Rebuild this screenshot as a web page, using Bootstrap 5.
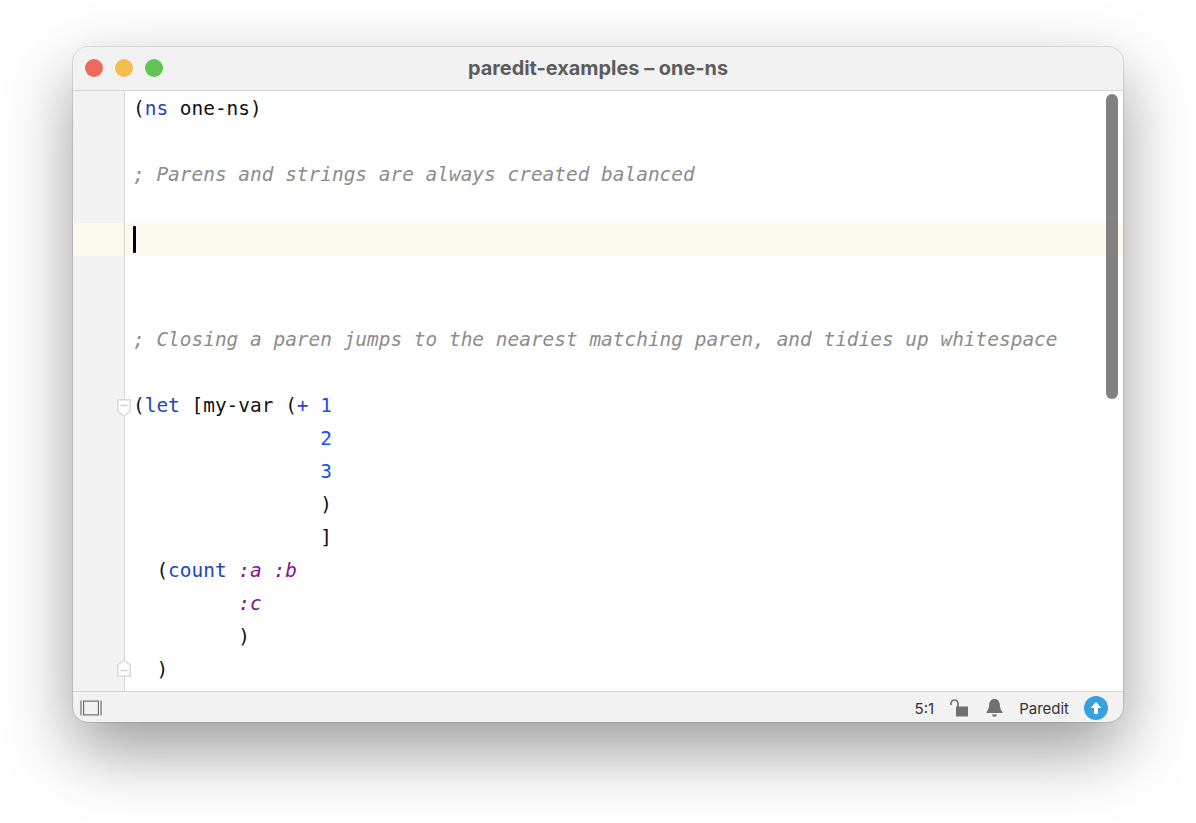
<!DOCTYPE html>
<html lang="en">
<head>
<meta charset="utf-8">
<title>paredit-examples – one-ns</title>
<link href="https://cdn.jsdelivr.net/npm/bootstrap@5.3.0/dist/css/bootstrap.min.css" rel="stylesheet">
<style>
html,body{height:100%;background:#fff;overflow:hidden}
.stage{padding:47px 73px 0}
.win{width:1050px;height:675px;border-radius:15px;background:#f2f2f2;box-shadow:0 0 0 1px rgba(0,0,0,.1),0 28px 68px rgba(0,0,0,.4);overflow:hidden}
.titlebar{height:44px;border-bottom:1px solid #d6d6d6;padding-left:12px}
.dots{gap:12px;margin-top:-1px}
.dot{width:18px;height:18px;border-radius:50%}
.dot-r{background:#ee6a5f}.dot-y{background:#f5bd4f}.dot-g{background:#61c454}
.wintitle{left:0;right:0;text-align:center;font:700 19.9px/41px Inter,"Liberation Sans",sans-serif;color:#5c5c5c}
.editor{height:600px;background:#fff;overflow:hidden}
.ln{height:33px;font:19.44px/33px "DejaVu Sans Mono","Liberation Mono",monospace;color:#111;white-space:pre}
.gut{flex:0 0 52px;background:#f2f2f2;border-right:1px solid #d6d6d6}
.code{padding:1px 0 0 8px}
.ln-cur,.ln-cur .gut{background:#fcfaee}
.ln-last{height:39px}
.kw{color:#1f45bd}.num{color:#1750eb}.key{color:#871094;font-style:italic}
.cmt{color:#8c8c8c;font-style:italic}
.caret{display:inline-block;width:3px;height:27px;background:#000;vertical-align:top;margin:2px 0 0 0;border-radius:1px}
.fold{position:absolute;right:-7px;top:11px;width:14px;height:18px}
.fold-end{top:7px}
.sbar{position:absolute;left:1033px;top:3px;width:12px;height:305px;border-radius:6px;background:rgba(90,90,90,.76)}
.status{height:31px;border-top:1px solid #d6d6d6;padding:1px 15px 0 7px;font:15px/1 Inter,"Liberation Sans",sans-serif;color:#333}
.status span{padding-top:1px}
.ic{display:block}
</style>
</head>
<body>
<div class="stage">
<div class="win d-flex flex-column position-relative">
  <div class="titlebar d-flex align-items-center position-relative">
    <div class="wintitle position-absolute">paredit-examples – one-ns</div>
    <div class="dots d-flex position-relative"><span class="dot dot-r"></span><span class="dot dot-y"></span><span class="dot dot-g"></span></div>
  </div>
  <div class="editor position-relative">
    <div class="ln d-flex"><div class="gut"></div><div class="code">(<span class="kw">ns</span> one-ns)</div></div>
    <div class="ln d-flex"><div class="gut"></div><div class="code"></div></div>
    <div class="ln d-flex"><div class="gut"></div><div class="code cmt">; Parens and strings are always created balanced</div></div>
    <div class="ln d-flex"><div class="gut"></div><div class="code"></div></div>
    <div class="ln ln-cur d-flex"><div class="gut"></div><div class="code"><span class="caret"></span></div></div>
    <div class="ln d-flex"><div class="gut"></div><div class="code"></div></div>
    <div class="ln d-flex"><div class="gut"></div><div class="code"></div></div>
    <div class="ln d-flex"><div class="gut"></div><div class="code cmt">; Closing a paren jumps to the nearest matching paren, and tidies up whitespace</div></div>
    <div class="ln d-flex"><div class="gut"></div><div class="code"></div></div>
    <div class="ln d-flex"><div class="gut position-relative"><svg class="fold" viewBox="0 0 14 18"><path d="M.8.8H13.200V12L7 17 .8 12Z" fill="#fff" stroke="#dadada" stroke-width="1.600"/><path d="M3.500 6.500h7" stroke="#cfcfcf" stroke-width="1.500"/></svg></div><div class="code">(<span class="kw">let</span> [my-var (<span class="kw">+</span> <span class="num">1</span></div></div>
    <div class="ln d-flex"><div class="gut"></div><div class="code">                <span class="num">2</span></div></div>
    <div class="ln d-flex"><div class="gut"></div><div class="code">                <span class="num">3</span></div></div>
    <div class="ln d-flex"><div class="gut"></div><div class="code">                )</div></div>
    <div class="ln d-flex"><div class="gut"></div><div class="code">                ]</div></div>
    <div class="ln d-flex"><div class="gut"></div><div class="code">  (<span class="kw">count</span> <span class="key">:a</span> <span class="key">:b</span></div></div>
    <div class="ln d-flex"><div class="gut"></div><div class="code">         <span class="key">:c</span></div></div>
    <div class="ln d-flex"><div class="gut"></div><div class="code">         )</div></div>
    <div class="ln ln-last d-flex"><div class="gut position-relative"><svg class="fold fold-end" viewBox="0 0 14 18"><path d="M.8 17.200H13.200V6L7 1 .8 6Z" fill="#fff" stroke="#dadada" stroke-width="1.600"/><path d="M3.500 11.500h7" stroke="#cfcfcf" stroke-width="1.500"/></svg></div><div class="code">  )</div></div>
    <div class="sbar"></div>
  </div>
  <div class="status d-flex align-items-center">
    <svg class="ic" width="22" height="16" viewBox="0 0 22 16" fill="none" stroke="#6e6e6e" stroke-width="1.200"><path d="M1 .5v15M21 .5v15"/><rect x="3.600" y="1.100" width="14.800" height="13.800"/></svg>
    <div class="ms-auto d-flex align-items-center">
      <span>5:1</span>
      <svg class="ic ms-3" width="18" height="18" viewBox="0 0 18 18"><path d="M1 6V4.500a3.500 3.500 0 0 1 7 0V8" fill="none" stroke="#707070" stroke-width="1.700"/><rect x="6" y="7.500" width="12" height="10" fill="#707070"/></svg>
      <svg class="ic" style="margin-left:18px" width="17" height="19" viewBox="0 0 17 19" fill="#707070"><path d="M8.500 1C5 1 3.400 3.600 3.200 6.500c-.2 3-.6 5-2.700 7.500v1h16v-1c-2.100-2.500-2.500-4.500-2.700-7.500C13.600 3.600 12 1 8.500 1Z"/><path d="M6 16.500h5a2.500 2.200 0 0 1-5 0Z"/></svg>
      <span style="margin-left:16px">Paredit</span>
      <svg class="ic" style="margin-left:15px" width="24" height="24" viewBox="0 0 24 24"><circle cx="12" cy="12" r="12" fill="#3a9fdd"/><path d="M12 6l5.500 6H14v6h-4v-6H6.500Z" fill="#fff"/></svg>
    </div>
  </div>
</div>
</div>
</body>
</html>
